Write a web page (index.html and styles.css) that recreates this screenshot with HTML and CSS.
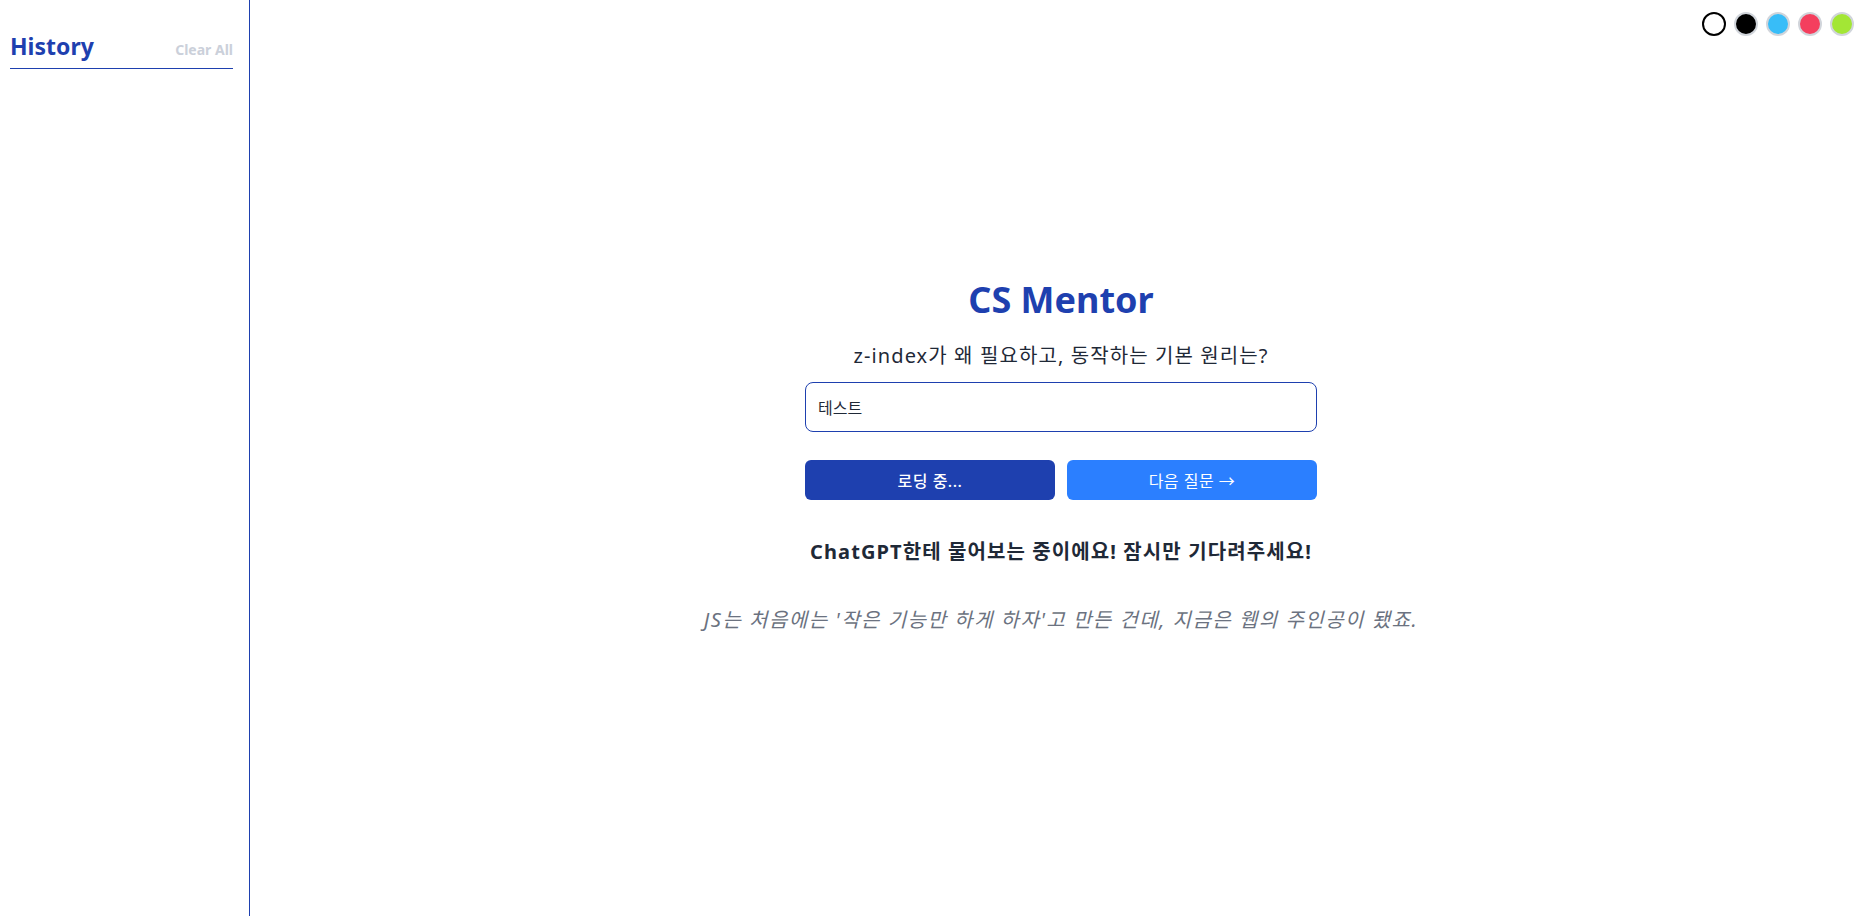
FILE: index.html
```html
<!DOCTYPE html>
<html lang="ko">
<head>
<meta charset="utf-8">
<title>CS Mentor</title>
<link rel="stylesheet" href="styles.css">
</head>
<body>
<div class="app">
  <aside class="sidebar">
    <div class="sidebar-head">
      <h2 class="sidebar-title">History</h2>
      <button class="clear-btn">Clear All</button>
    </div>
  </aside>
  <main class="main">
    <div class="panel">
      <h1 class="title">CS Mentor</h1>
      <p class="question">z-index가 왜 필요하고, 동작하는 기본 원리는?</p>
      <input class="answer" type="text" value="테스트">
      <div class="actions">
        <button class="btn btn-loading">로딩 중...</button>
        <button class="btn btn-next">다음 질문 →</button>
      </div>
      <p class="status">ChatGPT한테 물어보는 중이에요! 잠시만 기다려주세요!</p>
      <p class="trivia">JS는 처음에는 '작은 기능만 하게 하자'고 만든 건데, 지금은 웹의 주인공이 됐죠.</p>
    </div>
  </main>
  <div class="themes">
    <span class="dot dot-white"></span>
    <span class="dot dot-black"></span>
    <span class="dot dot-sky"></span>
    <span class="dot dot-rose"></span>
    <span class="dot dot-lime"></span>
  </div>
</div>
</body>
</html>
```
FILE: styles.css
```css
* { box-sizing: border-box; }
html, body { margin: 0; padding: 0; height: 100%; background: #fff; }
body {
  font-family: "Noto Sans", "Noto Sans CJK KR", sans-serif;
  color: #1f2937;
}
.app { display: flex; height: 100vh; position: relative; }
.sidebar {
  width: 250px;
  flex: none;
  border-right: 1px solid #1e40af;
  padding: 29px 16px 0 10px;
}
.sidebar-head {
  display: flex;
  justify-content: space-between;
  align-items: baseline;
  border-bottom: 1px solid #1e40af;
  padding-bottom: 5px;
}
.sidebar-title {
  margin: 0;
  font-size: 23px;
  font-weight: 700;
  color: #1e40af;
  line-height: 34px;
}
.clear-btn {
  border: 0;
  background: none;
  padding: 0;
  font-family: inherit;
  font-size: 14px;
  font-weight: 700;
  color: #cbd0da;
}
.main {
  flex: 1;
  display: flex;
  align-items: center;
  justify-content: center;
  padding-left: 8px;
  padding-bottom: 6px;
}
.panel {
  width: 512px;
  display: flex;
  flex-direction: column;
  align-items: center;
}
.title {
  margin: 0;
  font-size: 36px;
  font-weight: 700;
  color: #1e40af;
  line-height: 48px;
}
.question {
  margin: 18px 0 0;
  font-size: 20px;
  letter-spacing: 1.1px;
  line-height: 28px;
  white-space: nowrap;
}
.answer {
  margin-top: 12px;
  width: 100%;
  height: 50px;
  border: 1px solid #1e40af;
  border-radius: 8px;
  padding: 0 12px;
  font-family: inherit;
  font-size: 16px;
  color: #1f2937;
  outline: none;
}
.actions {
  margin-top: 28px;
  width: 100%;
  display: flex;
  gap: 12px;
}
.btn {
  flex: 1;
  height: 40px;
  border: 0;
  border-radius: 6px;
  color: #fff;
  font-family: inherit;
  font-size: 16px;
  letter-spacing: 0.5px;
}
.btn-loading { background: #1e40af; font-weight: 500; }
.btn-next { background: #2b7fff; }
.status {
  margin: 38px 0 0;
  font-size: 20px;
  font-weight: 700;
  letter-spacing: 1.1px;
  line-height: 28px;
  white-space: nowrap;
}
.trivia {
  margin: 40px 0 0;
  font-size: 20px;
  font-style: italic;
  letter-spacing: 1.5px;
  color: #6b7280;
  line-height: 28px;
  white-space: nowrap;
}
.themes {
  position: absolute;
  top: 12px;
  right: 10px;
  display: flex;
  gap: 8px;
}
.dot {
  width: 24px;
  height: 24px;
  border-radius: 50%;
  border: 2px solid #d1d5db;
}
.dot-white { background: #fff; border-color: #000; }
.dot-black { background: #000; }
.dot-sky { background: #38bdf8; }
.dot-rose { background: #f43f5e; }
.dot-lime { background: #a3e635; }
```
